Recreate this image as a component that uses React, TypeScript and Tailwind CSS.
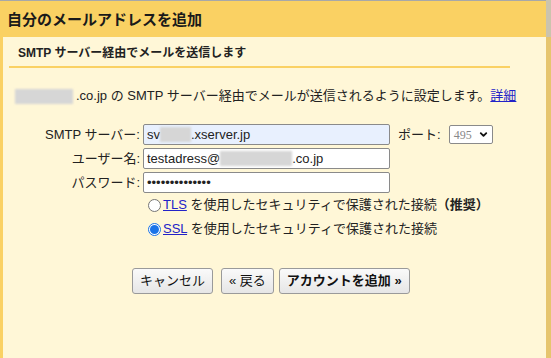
import { ChevronDown } from 'lucide-react'

const font = { fontFamily: '"Liberation Sans", "Noto Sans CJK JP", sans-serif' }

function Blur({ w }: { w: number }) {
  return (
    <span
      className="inline-block h-[15px] bg-[#d6d6d6] blur-[1px] align-middle"
      style={{ width: w }}
    />
  )
}

function Field({ label, children, blue = false }: { label: string; children: React.ReactNode; blue?: boolean }) {
  return (
    <div className="flex h-[21px] items-center">
      <div className="w-[138px] pr-[1px] text-right">{label}</div>
      <div
        className={
          'ml-[2px] flex h-[21px] w-[247px] items-center overflow-hidden rounded-[2px] border border-[#8a8a8a] pl-[3px] ' +
          (blue ? 'bg-[#e8f0fe]' : 'bg-white')
        }
      >
        {children}
      </div>
    </div>
  )
}

function Radio({ checked = false }: { checked?: boolean }) {
  return checked ? (
    <span className="flex h-[13px] w-[13px] items-center justify-center rounded-full border border-[#1a73e8] bg-white">
      <span className="h-[9px] w-[9px] rounded-full bg-[#1a73e8]" />
    </span>
  ) : (
    <span className="h-[13px] w-[13px] rounded-full border border-[#767676] bg-white" />
  )
}

function clsx(...a: (string | false)[]) {
  return a.filter(Boolean).join(' ')
}

function Btn({ children, bold = false }: { children: React.ReactNode; bold?: boolean }) {
  return (
    <button
      type="button"
      className={clsx(
        'h-[26px] rounded-[3px] border border-[#9a9a9a] bg-gradient-to-b from-[#fafafa] to-[#e6e6e6] px-[7px] text-[13px] text-[#111]',
        bold && 'font-bold'
      )}
    >
      {children}
    </button>
  )
}

export default function App() {
  return (
    <div className="flex h-[358px] w-[551px] overflow-hidden text-[13px] text-[#222]" style={font}>
      <div className="flex w-[546px] flex-col">
        {/* header */}
        <div className="flex h-[37px] items-center border-t border-[#a8a8a8] bg-[#fad163] pl-[7px] pt-[2px] text-[15px] font-bold text-[#1a1a1a]">
          自分のメールアドレスを追加
        </div>

        {/* panel */}
        <div className="flex flex-1 flex-col border-l-[3px] border-[#fad163] bg-[#fff7d7]">
          <div className="mt-[8px] pl-[15px] text-[12px] font-bold leading-[16px]">
            SMTP サーバー経由でメールを送信します
          </div>
          <div className="ml-[6px] mt-[5px] h-[2px] w-[501px] bg-[#fad163]" />

          <div className="mt-[20px] flex items-center gap-[3px] pl-[12px] leading-[16px]">
            <Blur w={58} />
            <span>
              .co.jp の SMTP サーバー経由でメールが送信されるように設定します。
              <a className="text-[#2323c8] underline">詳細</a>
            </span>
          </div>

          {/* form */}
          <div className="mt-[20px] flex flex-col gap-[3px]">
            <div className="flex items-center">
              <Field label="SMTP サーバー:" blue>
                <span>sv</span>
                <Blur w={31} />
                <span>.xserver.jp</span>
              </Field>
              <span className="ml-[8px]">ポート:</span>
              <div className="ml-[8px] flex h-[19px] w-[44px] items-center justify-between rounded-[2px] border border-[#8a8a8a] bg-white pl-[4px] pr-[3px] text-[12px] text-[#888]">
                <span style={{ fontFamily: '"Liberation Serif", serif' }}>495</span>
                <ChevronDown className="h-[11px] w-[11px] text-[#111]" strokeWidth={4} />
              </div>
            </div>
            <Field label="ユーザー名:">
              <span>testadress@</span>
              <Blur w={72} />
              <span>.co.jp</span>
            </Field>
            <Field label="パスワード:">
              <span>••••••••••••••</span>
            </Field>
          </div>

          {/* radios */}
          <div className="flex flex-col pl-[145px]">
            <div className="flex h-[24px] items-center gap-[2px]">
              <Radio />
              <span>
                <a className="text-[#2323c8] underline">TLS</a> を使用したセキュリティで保護された接続
                <b>（推奨）</b>
              </span>
            </div>
            <div className="flex h-[24px] items-center gap-[2px]">
              <Radio checked />
              <span>
                <a className="text-[#2323c8] underline">SSL</a> を使用したセキュリティで保護された接続
              </span>
            </div>
          </div>

          {/* buttons */}
          <div className="mt-[27px] flex pl-[129px]">
            <Btn>キャンセル</Btn>
            <div className="ml-[8px]">
              <Btn>« 戻る</Btn>
            </div>
            <div className="ml-[5px]">
              <Btn bold>アカウントを追加 »</Btn>
            </div>
          </div>
        </div>
      </div>

      {/* right edge */}
      <div className="flex w-[5px] flex-col">
        <div className="h-[37px] bg-[#cbc4ad]" />
        <div className="flex-1 bg-[#e6c56e]" />
      </div>
    </div>
  )
}
